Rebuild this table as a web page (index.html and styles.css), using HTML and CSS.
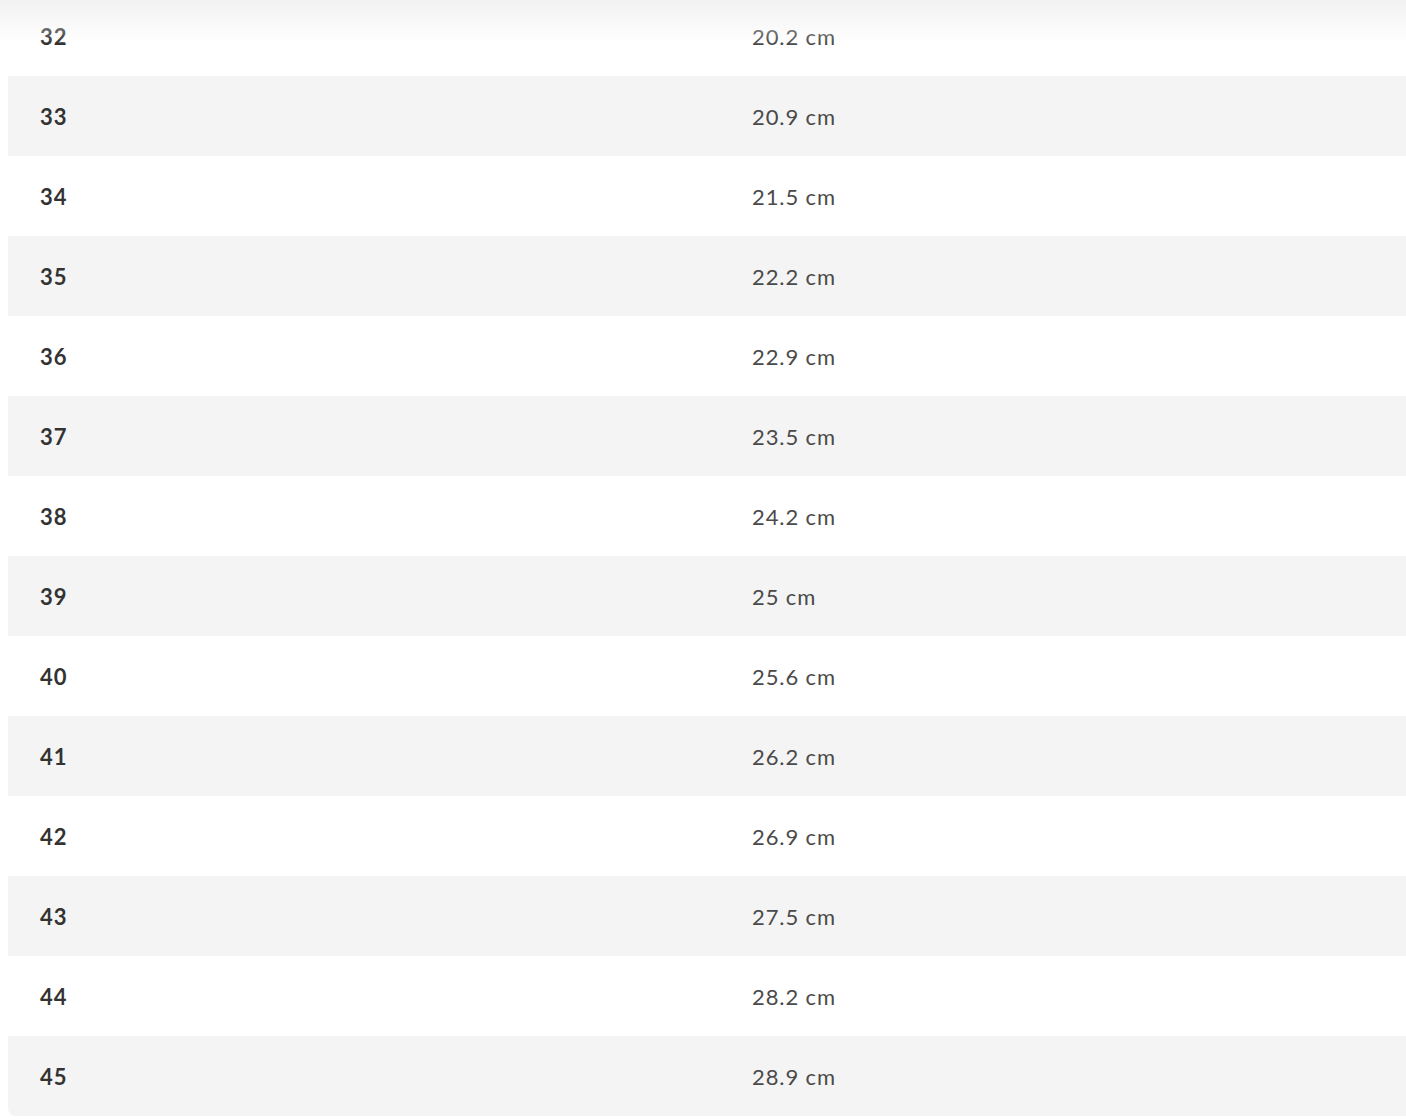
FILE: index.html
```html
<!DOCTYPE html>
<html lang="en">
<head>
    <meta charset="UTF-8">
    <meta name="viewport" content="width=device-width, initial-scale=1.0">
    <title>Size guide</title>
    <link rel="stylesheet" href="styles.css">
</head>
<body>
    <div class="top-shadow"></div>

    <div class="size-table">
        <div class="size-row"><div class="size-eu">32</div><div class="size-cm">20.2 cm</div></div>
        <div class="size-row"><div class="size-eu">33</div><div class="size-cm">20.9 cm</div></div>
        <div class="size-row"><div class="size-eu">34</div><div class="size-cm">21.5 cm</div></div>
        <div class="size-row"><div class="size-eu">35</div><div class="size-cm">22.2 cm</div></div>
        <div class="size-row"><div class="size-eu">36</div><div class="size-cm">22.9 cm</div></div>
        <div class="size-row"><div class="size-eu">37</div><div class="size-cm">23.5 cm</div></div>
        <div class="size-row"><div class="size-eu">38</div><div class="size-cm">24.2 cm</div></div>
        <div class="size-row"><div class="size-eu">39</div><div class="size-cm">25 cm</div></div>
        <div class="size-row"><div class="size-eu">40</div><div class="size-cm">25.6 cm</div></div>
        <div class="size-row"><div class="size-eu">41</div><div class="size-cm">26.2 cm</div></div>
        <div class="size-row"><div class="size-eu">42</div><div class="size-cm">26.9 cm</div></div>
        <div class="size-row"><div class="size-eu">43</div><div class="size-cm">27.5 cm</div></div>
        <div class="size-row"><div class="size-eu">44</div><div class="size-cm">28.2 cm</div></div>
        <div class="size-row"><div class="size-eu">45</div><div class="size-cm">28.9 cm</div></div>
    </div>
</body>
</html>
```

FILE: styles.css
```css
html, body {
    overflow: hidden;
}

body {
    font-family: Lato, 'Open Sans', sans-serif;
    margin: 0;
    padding: 0 0 0 8px;
    background: #ffffff;
    color: #333333;
}

.top-shadow {
    position: fixed;
    top: 0;
    left: 0;
    right: 0;
    height: 44px;
    background: linear-gradient(180deg, rgba(240, 240, 240, 0.9) 0%, rgba(255, 255, 255, 0) 100%);
    pointer-events: none;
    z-index: 2;
}

.size-table {
    margin-top: -4px;
    width: 1424px;
}

.size-row {
    display: grid;
    grid-template-columns: 712px 712px;
    height: 80px;
    align-items: center;
}

.size-row:nth-child(even) {
    background: #f4f4f4;
}

.size-row:last-child {
    border-radius: 0 0 8px 8px;
}

.size-eu,
.size-cm {
    padding-left: 32px;
    font-size: 22px;
}

.size-eu {
    font-weight: 700;
    color: #333333;
    letter-spacing: 1px;
}

.size-cm {
    font-weight: 400;
    color: #4a4a4a;
    letter-spacing: 0.9px;
}
```
